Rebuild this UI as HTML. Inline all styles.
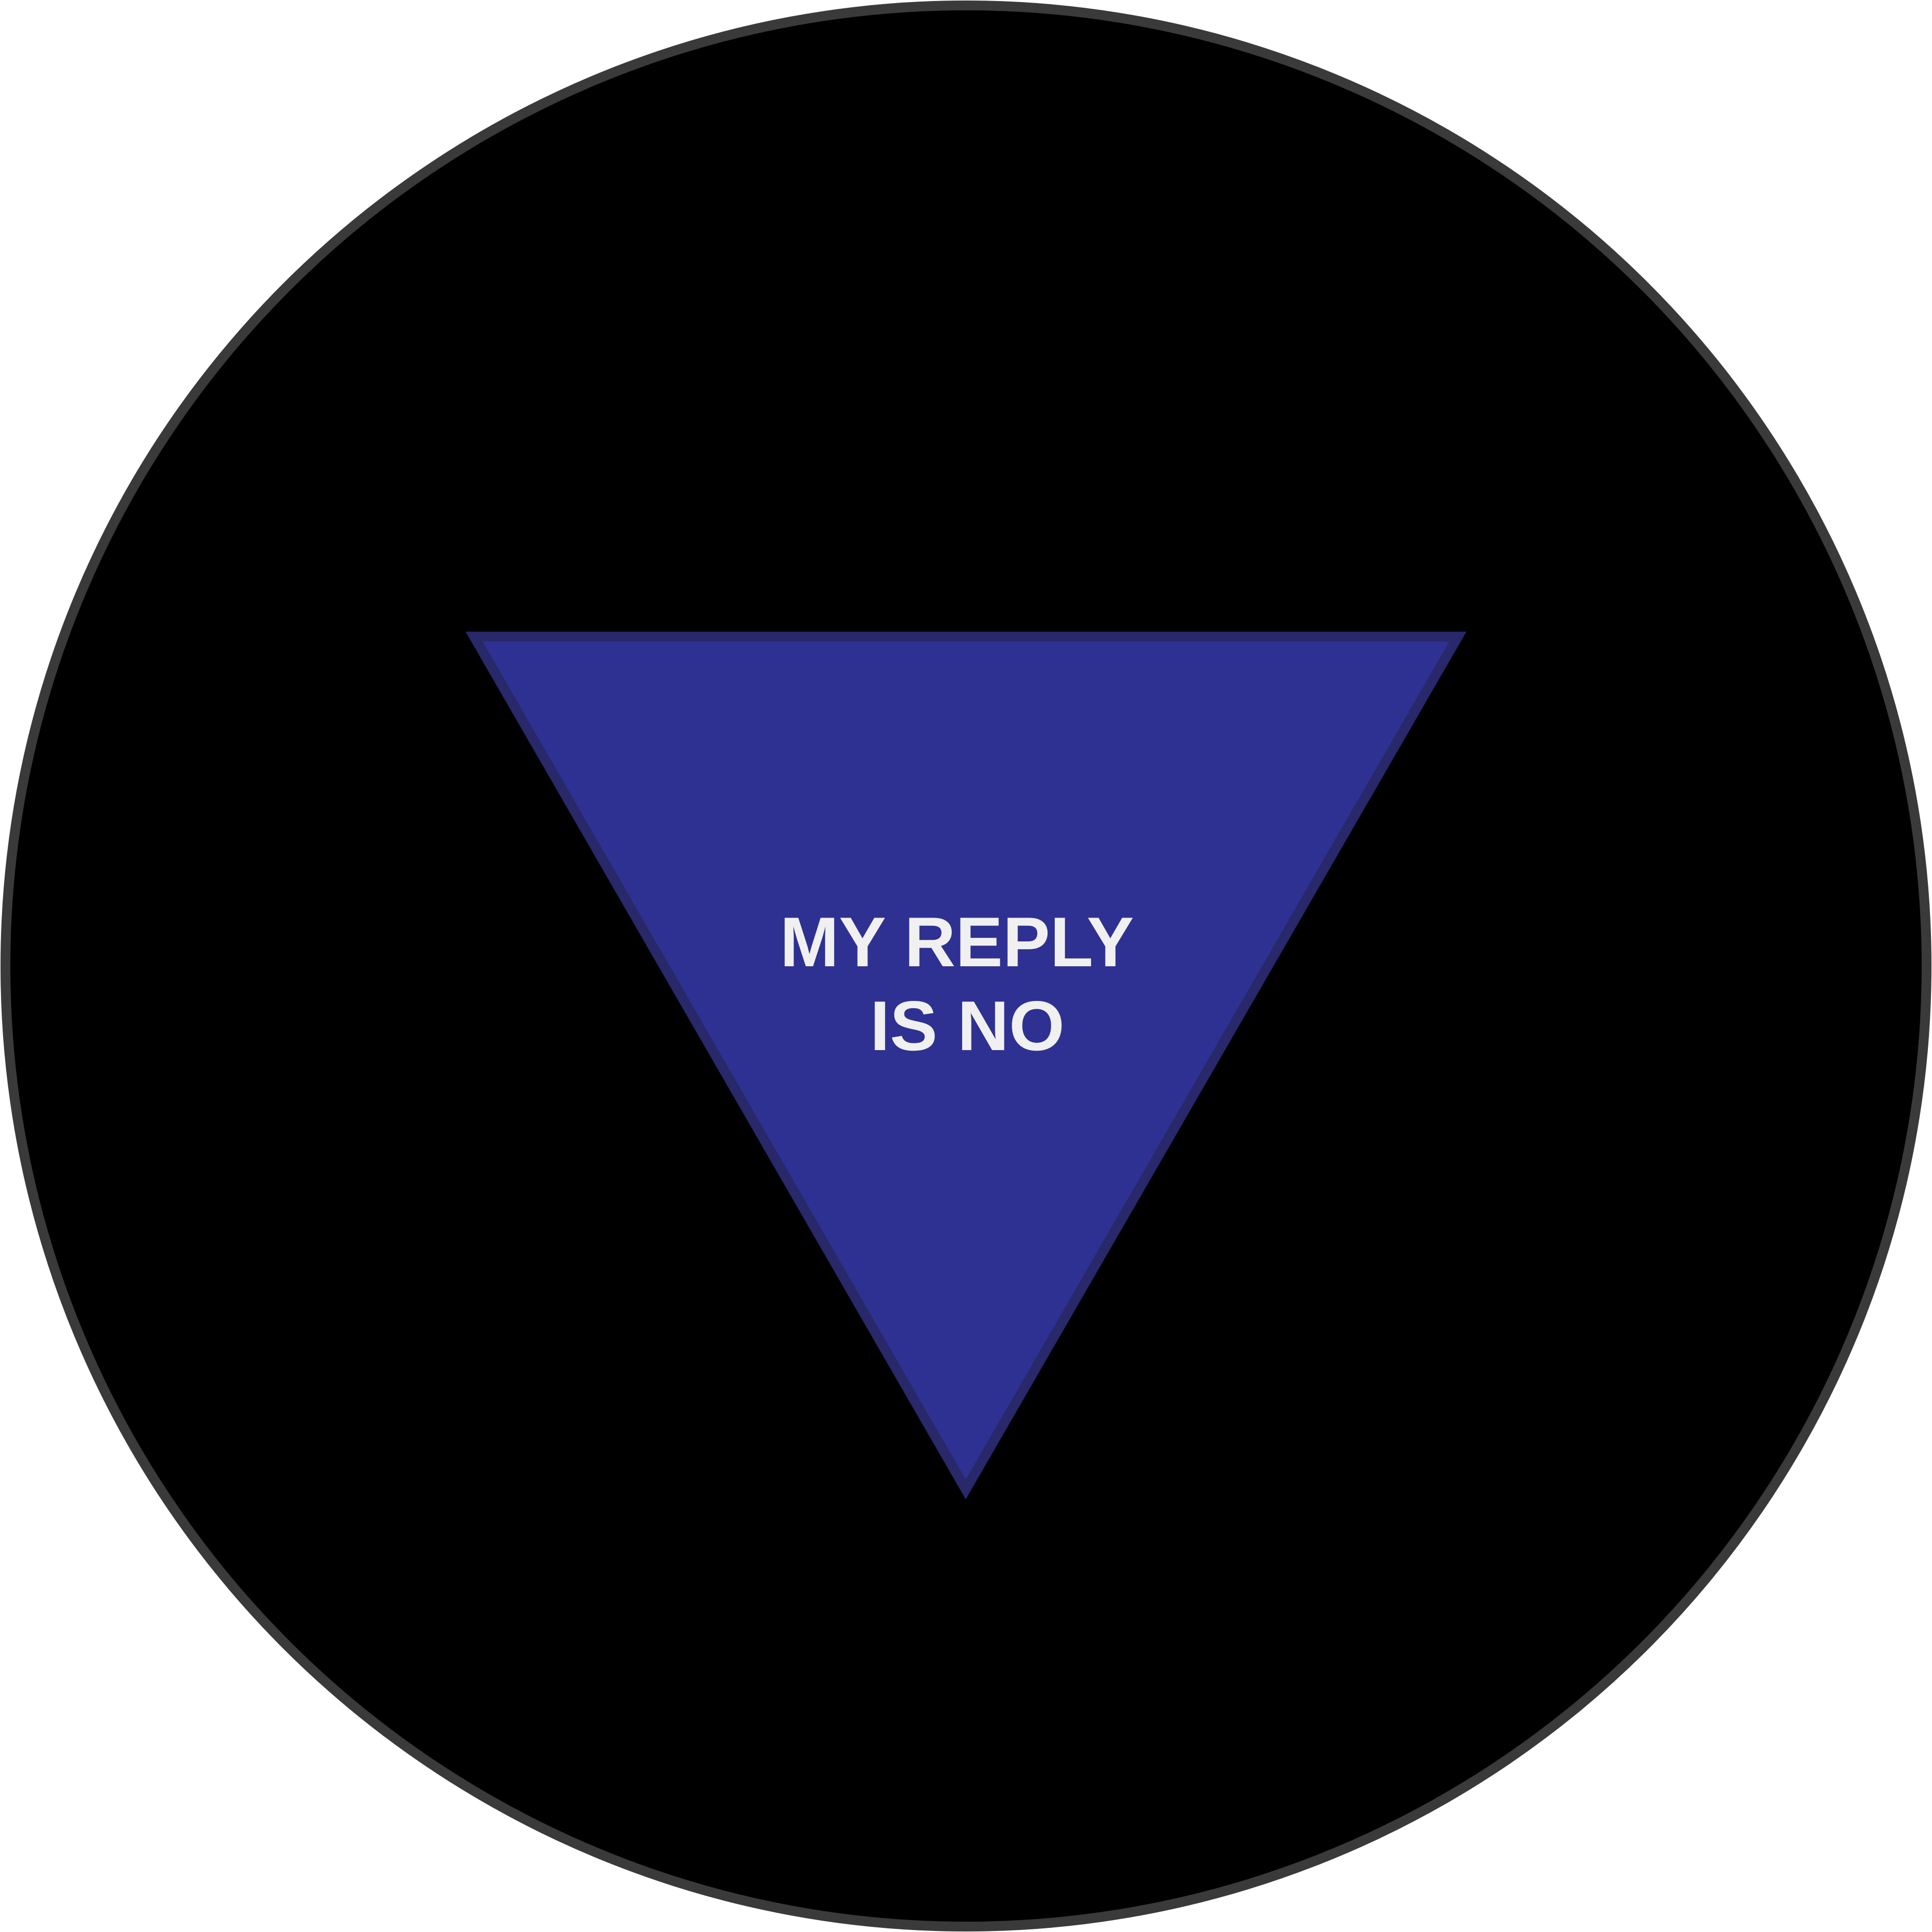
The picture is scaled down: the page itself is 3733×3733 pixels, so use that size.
<!DOCTYPE html>
<html><head><meta charset="utf-8"><style>
html,body{margin:0;padding:0;background:#fff;}
svg{display:block;}
</style></head><body>
<svg width="3733" height="3733" viewBox="0 0 3733 3733" xmlns="http://www.w3.org/2000/svg">
<circle cx="1866.5" cy="1866.5" r="1856" fill="#000" stroke="#3a3a3a" stroke-width="19"/>
<polygon points="916,1230 2817,1230 1866,2878" fill="#2e3192" stroke="#28286a" stroke-width="19"/>
<text x="1507" y="1867" font-family="Liberation Sans, sans-serif" font-weight="bold" font-size="136" fill="#f0f0f0" textLength="684" lengthAdjust="spacingAndGlyphs">MY REPLY</text>
<text x="1681" y="2029" font-family="Liberation Sans, sans-serif" font-weight="bold" font-size="136" fill="#f0f0f0" textLength="376" lengthAdjust="spacingAndGlyphs">IS NO</text>
</svg>
</body></html>
